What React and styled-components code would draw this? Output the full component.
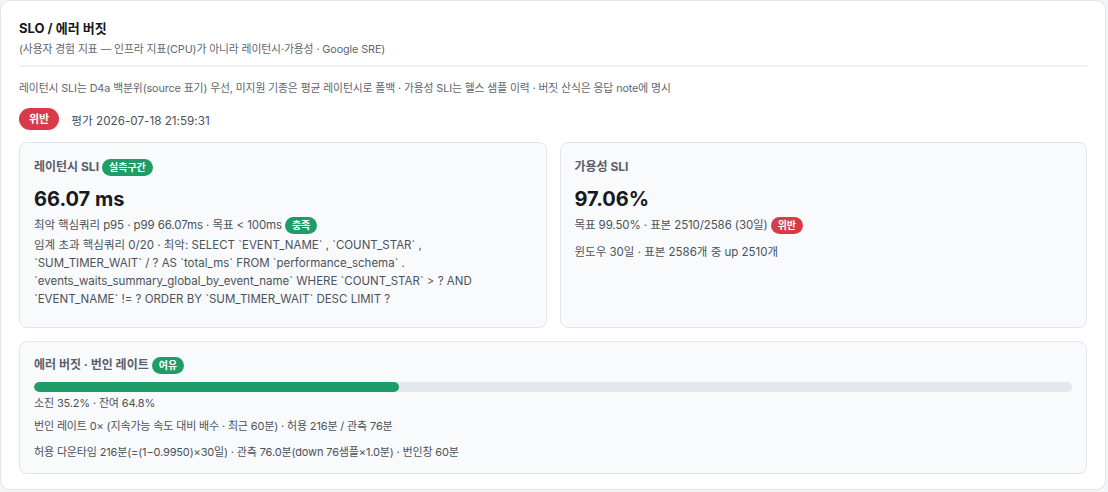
import React from "react";
import styled, { createGlobalStyle } from "styled-components";

const GlobalStyle = createGlobalStyle`
  html, body {
    margin: 0;
    padding: 0;
    background: #f3f4f6;
  }
  body {
    font-family: "Inter", "Noto Sans CJK KR", sans-serif;
    color: #1f2328;
  }
`;

const Panel = styled.section`
  box-sizing: border-box;
  width: 1106px;
  height: 490px;
  background: #ffffff;
  border: 1px solid #e3e5e9;
  border-radius: 10px;
  padding: 17px 18px 0 18px;
`;

const Header = styled.div`
  padding-bottom: 7px;
  border-bottom: 2px solid #f0f1f3;
`;

const Title = styled.h2`
  margin: 0;
  font-size: 13px;
  font-weight: 700;
  line-height: 20px;
  color: #16191d;
`;

const Subtitle = styled.div`
  margin-top: 4px;
  font-size: 10.8px;
  line-height: 16px;
  letter-spacing: -0.1px;
  color: #5f6670;
`;

const Note = styled.p`
  margin: 14px 0 0;
  font-size: 10.8px;
  line-height: 16px;
  letter-spacing: -0.1px;
  color: #5f6670;
`;

const StatusRow = styled.div`
  display: flex;
  align-items: center;
  gap: 12px;
  margin-top: 11px;
  font-size: 11.7px;
  color: #4b525b;
`;

const Pill = styled.span`
  display: inline-flex;
  align-items: center;
  justify-content: center;
  border-radius: 999px;
  color: #fff;
  font-weight: 700;
  background: ${(p) => (p.$tone === "bad" ? "#d93a4a" : "#1f9d68")};
  font-size: ${(p) => (p.$size === "lg" ? "11px" : "10px")};
  height: ${(p) => (p.$size === "lg" ? "22px" : "17px")};
  padding: 0 ${(p) => (p.$size === "lg" ? "10px" : "7px")};
  line-height: 1;
`;

const Grid = styled.div`
  display: grid;
  grid-template-columns: 1fr 1fr;
  gap: 13px;
  margin-top: 12px;
`;

const Card = styled.div`
  box-sizing: border-box;
  background: #f9fafc;
  border: 1px solid #e2e5ea;
  border-radius: 8px;
  padding: 14px 14px 14px;
  min-height: ${(p) => p.$minH || "auto"};
`;

const BudgetCard = styled(Card)`
  margin-top: 13px;
  padding-top: 13px;
  padding-bottom: 12px;
`;

const CardTitle = styled.div`
  display: flex;
  align-items: center;
  gap: 3px;
  font-size: 12px;
  font-weight: 700;
  line-height: 20px;
  color: #585f69;
`;

const Value = styled.div`
  margin-top: 9px;
  font-size: 20px;
  font-weight: 700;
  line-height: 26px;
  color: #16191d;
`;

const Meta = styled.div`
  display: flex;
  align-items: center;
  gap: 3px;
  margin-top: ${(p) => p.$gap || "4px"};
  font-size: 11.5px;
  line-height: 18px;
  letter-spacing: -0.1px;
  color: #4b525b;
`;

const Detail = styled.div`
  margin-top: ${(p) => p.$gap || "2px"};
  font-size: 11.5px;
  line-height: 18px;
  color: #4b525b;
`;

const Track = styled.div`
  margin-top: 7px;
  height: 10px;
  border-radius: 5px;
  background: #e4e7ee;
  overflow: hidden;
`;

const Fill = styled.div`
  height: 100%;
  border-radius: 5px;
  background: #1f9d68;
`;

const SmallLine = styled.div`
  margin-top: ${(p) => p.$gap || "0"};
  font-size: 11px;
  line-height: 18px;
  letter-spacing: -0.15px;
  color: #4b525b;
`;

const burned = 35.2;

const worstQuery = [
  "임계 초과 핵심쿼리 0/20 · 최악: SELECT `EVENT_NAME` , `COUNT_STAR` ,",
  "`SUM_TIMER_WAIT` / ? AS `total_ms` FROM `performance_schema` .",
  "`events_waits_summary_global_by_event_name` WHERE `COUNT_STAR` > ? AND",
  "`EVENT_NAME` != ? ORDER BY `SUM_TIMER_WAIT` DESC LIMIT ?",
];

export default function App() {
  return (
    <>
      <GlobalStyle />
      <Panel>
        <Header>
          <Title>SLO / 에러 버짓</Title>
          <Subtitle>(사용자 경험 지표 — 인프라 지표(CPU)가 아니라 레이턴시·가용성 · Google SRE)</Subtitle>
        </Header>
        <Note>
          레이턴시 SLI는 D4a 백분위(source 표기) 우선, 미지원 기종은 평균 레이턴시로 폴백 · 가용성 SLI는 헬스 샘플 이력 · 버짓 산식은 응답 note에 명시
        </Note>
        <StatusRow>
          <Pill $tone="bad" $size="lg">위반</Pill>
          <span>평가 2026-07-18 21:59:31</span>
        </StatusRow>

        <Grid>
          <Card $minH="186px">
            <CardTitle>
              레이턴시 SLI <Pill>실측구간</Pill>
            </CardTitle>
            <Value>66.07 ms</Value>
            <Meta>
              최악 핵심쿼리 p95 · p99 66.07ms · 목표 &lt; 100ms <Pill>충족</Pill>
            </Meta>
            <Detail>
              {worstQuery.map((line) => (
                <div key={line}>{line}</div>
              ))}
            </Detail>
          </Card>
          <Card $minH="186px">
            <CardTitle>가용성 SLI</CardTitle>
            <Value>97.06%</Value>
            <Meta>
              목표 99.50% · 표본 2510/2586 (30일) <Pill $tone="bad">위반</Pill>
            </Meta>
            <Detail $gap="9px">윈도우 30일 · 표본 2586개 중 up 2510개</Detail>
          </Card>
        </Grid>

        <BudgetCard>
          <CardTitle>
            에러 버짓 · 번인 레이트 <Pill>여유</Pill>
          </CardTitle>
          <Track>
            <Fill style={{ width: `${burned}%` }} />
          </Track>
          <SmallLine $gap="2px">소진 35.2% · 잔여 64.8%</SmallLine>
          <SmallLine $gap="5px">번인 레이트 0× (지속가능 속도 대비 배수 · 최근 60분) · 허용 216분 / 관측 76분</SmallLine>
          <SmallLine $gap="8px">허용 다운타임 216분(=(1−0.9950)×30일) · 관측 76.0분(down 76샘플×1.0분) · 번인창 60분</SmallLine>
        </BudgetCard>
      </Panel>
    </>
  );
}
